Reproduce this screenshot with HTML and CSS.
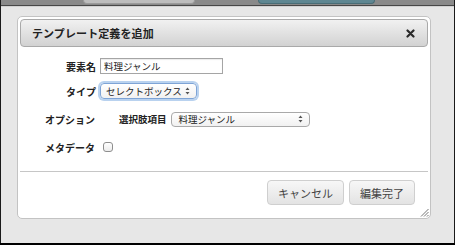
FILE: index.html
```html
<!DOCTYPE html>
<html lang="ja">
<head>
  <meta charset="utf-8" />
  <title>テンプレート定義を追加</title>
  <link rel="stylesheet" href="styles.css">
</head>
<body>
  <div class="frame">
    <div class="topbar">
      <span class="tab tab-grey"></span>
      <span class="tab tab-teal"></span>
    </div>

    <div class="dialog">
      <div class="titlebar">
        <span class="title">テンプレート定義を追加</span>
        <svg class="close" width="9" height="9" viewBox="0 0 9 9">
          <path d="M1.5 1.5L7.5 7.5M7.5 1.5L1.5 7.5" stroke="#2a2a2a" stroke-width="2.2" stroke-linecap="round"/>
        </svg>
      </div>

      <div class="form">
        <div class="row">
          <label class="lbl">要素名</label>
          <div class="field text">料理ジャンル</div>
        </div>
        <div class="row row-2">
          <label class="lbl">タイプ</label>
          <div class="field select focus">
            <span>セレクトボックス</span>
            <svg width="5" height="8" viewBox="0 0 5 8"><path d="M2.5 0.5L4.5 3H0.5ZM2.5 7.5L4.5 5H0.5Z" fill="#555"/></svg>
          </div>
        </div>
        <div class="row row-3">
          <label class="lbl lbl-left">オプション</label>
          <span class="sublbl">選択肢項目</span>
          <div class="field select wide">
            <span>料理ジャンル</span>
            <svg width="5" height="8" viewBox="0 0 5 8"><path d="M2.5 0.5L4.5 3H0.5ZM2.5 7.5L4.5 5H0.5Z" fill="#555"/></svg>
          </div>
        </div>
        <div class="row row-4">
          <label class="lbl lbl-left">メタデータ</label>
          <span class="check"></span>
        </div>
      </div>

      <div class="footer">
        <button class="btn btn-cancel">キャンセル</button>
        <button class="btn btn-done">編集完了</button>
      </div>

      <svg class="grip" width="9" height="9" viewBox="0 0 9 9">
        <path d="M8.5 1L1 8.5M8.5 4L4 8.5M8.5 7L7 8.5" stroke="#777" stroke-width="1"/>
      </svg>
    </div>
  </div>
</body>
</html>
```

FILE: styles.css
```css
*{box-sizing:border-box;margin:0;padding:0}
body{width:455px;height:245px;overflow:hidden;background:#000;font-family:'Noto Sans CJK JP','Noto Sans',sans-serif;color:#222}
.frame{width:455px;height:243px;border-left:1px solid #1a1a1a;border-right:1px solid #1a1a1a;background:#e7e7e7;overflow:hidden}

.topbar{height:6px;background:#8a8a8a;border-bottom:1px solid #474747;display:flex;padding-left:82px;gap:63px;box-shadow:0 1px 0 #d2d2d2}
.tab{display:block;height:4px;border-radius:0 0 6px 6px}
.tab-grey{width:112px;background:#bdbdbd;border:1px solid #9a9a9a;border-top:none}
.tab-teal{width:117px;background:#5f8792;border:1px solid #4a6d76;border-top:none}

.dialog{position:relative;width:414px;margin:10px 0 0 16px;background:#fff;border:1px solid #c3c3c3;border-radius:5px;padding:2px}
.titlebar{height:28px;display:flex;align-items:center;justify-content:space-between;padding:0 12px 0 11px;border:1px solid #a9a9a9;border-radius:4px;background:linear-gradient(#f1f1f1,#d2d2d2)}
.title{font-size:11px;font-weight:700;color:#222;letter-spacing:.1px}
.close{display:block;margin-top:1px}

.form{padding:11px 0 16px}
.row{display:flex;align-items:center;height:16px}
.row-2{margin-top:9px}
.row-3{margin-top:12px}
.row-4{margin-top:12px}
.lbl{width:76px;flex:none;text-align:right;font-size:10px;font-weight:700;color:#222}
.lbl-left{text-align:left;padding-left:25px}
.sublbl{margin-left:23px;font-size:9.5px;font-weight:700;color:#222}

.field{height:16px;display:flex;align-items:center;font-size:9.5px;color:#222;white-space:nowrap}
.text{width:123px;margin-left:4px;padding-left:3px;border:1px solid #a5a5a5;box-shadow:inset 0 1px 1px rgba(0,0,0,.08)}
.select{justify-content:space-between;margin-left:4px;padding:0 6px 0 5px;border:1px solid #a9a9a9;border-radius:4px;background:linear-gradient(#fff,#f1f1f1)}
.select span{font-size:9.5px}
.focus{width:97px;border-color:#7ea4d6;box-shadow:0 0 0 2px #b9d2ef}
.wide{width:139px;height:15px;padding-left:7px}

.check{width:10px;height:10px;margin-left:7px;border:1px solid #8e8e8e;border-radius:3px;background:linear-gradient(#fff,#ececec)}

.footer{display:flex;justify-content:flex-end;gap:5px;border-top:1px solid #c6c6c6;padding:8px 13px 11px 0}
.btn{height:25px;padding:0 10px;font-family:inherit;font-size:11px;color:#444;border:1px solid #cfcfcf;border-radius:4px;background:linear-gradient(#f7f7f7,#e3e3e3)}

.grip{position:absolute;right:1px;bottom:1px}
```
